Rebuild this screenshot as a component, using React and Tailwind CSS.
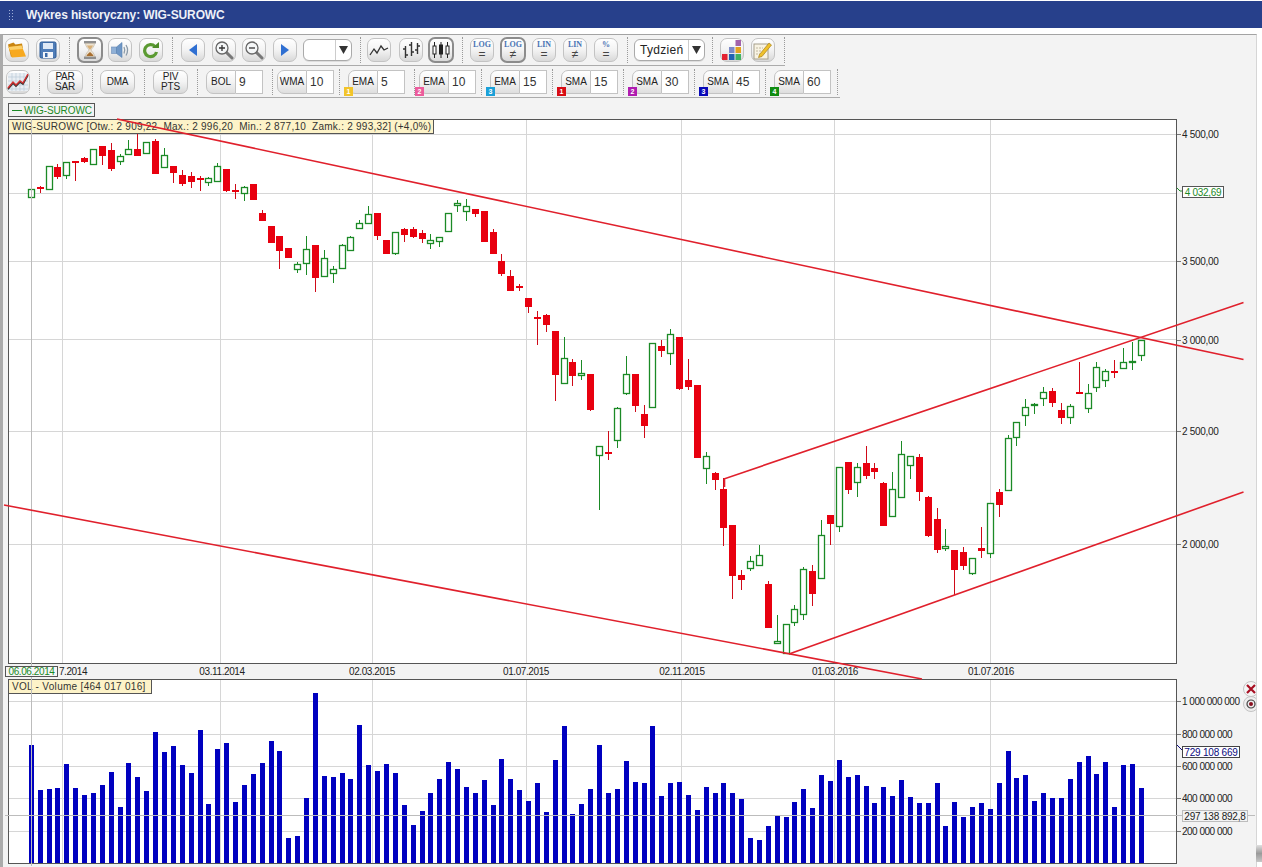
const candles = [
  [189,189,197,197,1],[186,187,189,193,0],[166,166,189,189,1],[164,167,177,179,0],[162,162,175,179,1],[161,161,163,181,0],
  [157,158,162,163,0],[149,149,164,164,1],[146,146,156,165,0],[143,150,169,171,0],[154,156,161,165,1],[140,149,154,154,1],
  [133,149,156,156,0],[142,142,153,153,1],[139,141,174,174,0],[148,155,167,167,1],[166,166,173,183,0],[170,175,184,186,0],
  [172,176,182,188,0],[176,178,180,191,0],[177,178,182,186,1],[163,166,181,181,1],[169,169,191,192,0],[184,190,192,199,0],
  [186,187,193,201,1],[184,184,200,200,0],[210,213,221,221,0],[226,226,243,243,0],[236,236,251,269,0],[248,248,258,258,0],
  [262,264,269,273,1],[236,249,263,275,1],[245,245,278,292,0],[250,258,276,276,1],[266,269,273,283,1],[244,245,268,268,1],
  [236,237,250,250,1],[220,223,228,228,1],[206,214,223,223,1],[213,213,236,240,0],[240,240,254,254,0],[232,232,253,255,1],
  [228,229,235,242,0],[227,229,237,238,0],[230,233,239,243,0],[234,240,243,249,1],[237,237,241,247,1],[213,213,231,231,1],
  [200,203,205,212,1],[199,206,211,221,1],[209,209,214,217,0],[211,211,242,242,0],[229,232,254,254,0],[254,261,274,276,0],
  [270,276,291,291,0],[284,286,287,291,0],[298,298,307,313,0],[311,317,319,345,0],[314,315,325,332,0],[331,331,375,401,0],
  [337,358,383,383,1],[359,362,376,386,0],[360,373,375,380,1],[374,374,410,411,0],[446,446,455,510,1],[431,452,454,460,0],
  [407,408,440,448,1],[356,374,393,395,1],[374,374,406,412,0],[405,414,426,438,0],[343,343,407,407,1],[340,346,351,357,0],
  [329,334,353,365,1],[337,337,389,390,0],[359,380,387,390,0],[385,385,458,458,0],[452,456,468,484,1],[472,473,480,490,0],
  [478,489,528,546,0],[525,525,576,599,0],[570,575,580,590,0],[556,561,568,571,1],[545,555,565,565,1],[581,584,628,628,0],
  [615,641,643,644,1],[624,624,653,653,1],[605,609,622,626,1],[567,569,614,620,1],[565,571,594,606,0],[520,535,578,578,1],
  [515,515,524,545,0],[467,467,526,532,1],[462,462,490,494,0],[463,467,482,497,1],[446,463,476,479,0],[463,468,472,479,0],
  [482,483,526,526,0],[472,489,516,516,1],[441,454,497,497,1],[456,456,465,479,1],[454,457,492,501,0],[496,497,536,537,0],
  [508,519,550,553,0],[529,546,548,551,1],[550,550,570,595,0],[547,552,566,570,0],[558,558,573,575,1],[527,548,551,558,0],
  [503,503,553,558,1],[489,492,505,517,0],[435,438,490,490,1],[422,422,437,446,1],[399,407,415,426,1],[403,404,405,414,1],
  [387,392,398,406,1],[388,391,403,407,0],[403,410,418,424,0],[404,406,417,424,1],[362,392,393,393,0],[384,393,408,413,1],
  [362,367,387,392,1],[369,371,380,387,1],[360,371,372,378,0],[348,362,368,369,1],[342,361,362,370,1],[340,340,355,361,1],
]

const volumeTops = [
  745,790,789,788,764,788,795,793,785,772,807,763,777,791,732,752,746,765,773,730,804,749,743,802,785,774,763,741,751,838,836,798,693,776,777,773,779,725,765,771,764,773,805,825,
  811,793,779,762,769,787,793,780,805,759,779,790,801,783,812,760,726,814,804,789,745,793,789,761,782,783,726,796,783,782,795,810,787,793,783,793,799,838,840,826,816,817,802,789,808,775,781,760,777,775,786,803,787,796,780,797,803,803,783,826,802,817,807,803,809,783,
  751,778,775,801,793,798,798,779,762,756,774,762,807,765,764,788,
]

const gridX = [62, 220, 372, 526, 681, 834, 990]
const priceGrid = [134, 193, 261, 339, 431, 544]
const volGrid = [701, 734, 766, 798, 831]
const priceLabels = [[134, '4 500,00'], [261, '3 500,00'], [340, '3 000,00'], [431, '2 500,00'], [544, '2 000,00']]
const volLabels = [[701, '1 000 000 000'], [734, '800 000 000'], [766, '600 000 000'], [798, '400 000 000'], [831, '200 000 000']]
const dates = [[73, '7.2014'], [222, '03.11.2014'], [372, '02.03.2015'], [526, '01.07.2015'], [682, '02.11.2015'], [835, '01.03.2016'], [991, '01.07.2016']]

const centerX = (i) => Math.floor(31.3 + 8.88 * i) + 0.5

function Candles() {
  return candles.map(([high, top, bottom, low, up], i) => {
    const x = centerX(i)
    const color = up ? '#1b8a26' : '#e8000f'
    return (
      <g key={i}>
        <line x1={x} x2={x} y1={high} y2={low} stroke={up ? '#1b8a26' : '#cf0a18'} />
        {up
          ? <rect x={x - 3} y={top + 0.5} width={6} height={bottom - top} fill="#fff" stroke={color} strokeWidth="1.3" shapeRendering="geometricPrecision" />
          : <rect x={x - 3.5} y={top} width={7} height={Math.max(bottom - top, 2)} fill={color} />}
      </g>
    )
  })
}

function Grid({ rows, top, bottom }) {
  return (
    <g stroke="#d6d6d6">
      {gridX.map((x) => <line key={x} x1={x + 0.5} x2={x + 0.5} y1={top} y2={bottom} />)}
      {rows.map((y) => <line key={y} x1={9} x2={1176} y1={y + 0.5} y2={y + 0.5} />)}
    </g>
  )
}

function AxisLabel({ y, children, base, className = '' }) {
  return (
    <div className={`absolute left-0 flex h-[12px] items-center whitespace-nowrap text-[10px] text-[#222] ${className}`} style={{ top: y - base - 6 }}>
      <span className="mr-px h-px w-[4px] bg-[#777]" />
      {children}
    </div>
  )
}

function Sep() {
  return <div className="h-[26px] w-px self-center border-l border-dotted border-[#9a9a9a]" />
}

function Btn({ className = '', active, children }) {
  return (
    <div className={`flex shrink-0 items-center justify-center rounded-[7px] bg-linear-to-b from-white via-[#f3f3f3] to-[#d9d9d9] ${active ? 'h-[26px] w-[26px] border-2 border-[#8c8c8c]' : 'h-[24px] w-[24px] border border-[#c3c3c3]'} ${className}`}>
      {children}
    </div>
  )
}

function TextBtn({ className = '', children }) {
  return (
    <div className={`flex h-[24px] shrink-0 flex-col items-center justify-center rounded-[7px] border border-[#c3c3c3] bg-linear-to-b from-white via-[#f3f3f3] to-[#d9d9d9] text-[10px] leading-[10px] tracking-[-0.2px] text-[#222] ${className}`}>
      {children}
    </div>
  )
}

function Scale({ active, top, bottom, className = '' }) {
  return (
    <Btn active={active} className={className}>
      <div className="flex flex-col items-center">
        <span className="font-['Liberation_Serif',serif] text-[8px] leading-[9px] font-bold text-[#4a74b4]">{top}</span>
        <span className="text-[12px] leading-[11px] text-[#444]">{bottom}</span>
      </div>
    </Btn>
  )
}

function Combo({ label, value, badge, badgeClass, className = '' }) {
  return (
    <div className={`relative flex h-[24px] w-[57px] shrink-0 ${className}`}>
      <div className="flex w-[30px] items-center justify-center rounded-l-[7px] border border-[#c3c3c3] bg-linear-to-b from-white via-[#f3f3f3] to-[#dedede] text-[10px] text-[#222]">{label}</div>
      <div className="flex flex-1 items-center border border-l-0 border-[#c3c3c3] bg-white pl-[3px] text-[12px] text-[#333]">{value}</div>
      {badge && <span className={`absolute top-[17px] -left-[4px] flex h-[9px] w-[9px] items-center justify-center text-[7px] leading-none font-bold text-white ${badgeClass}`}>{badge}</span>}
    </div>
  )
}

const Folder = () => (
  <svg width="20" height="18" viewBox="0 0 20 18">
    <path d="M1 3.500 6.500 1.500 8.500 3.500 15 2.500 16 8 4 16Z" fill="#c98512" />
    <path d="M1.500 6 14.500 4.500 19 15.500 5 16.500Z" fill="#f7a91f" />
    <path d="M1.500 6 14.500 4.500 16 8 3 9Z" fill="#fcd06a" />
  </svg>
)
const Floppy = () => (
  <svg width="18" height="18" viewBox="0 0 18 18">
    <rect x="1" y="1" width="16" height="16" rx="1.500" fill="#4f7db8" stroke="#2d5b96" />
    <rect x="4" y="2" width="10" height="6" fill="#dfe9f6" />
    <rect x="4" y="11" width="10" height="6" fill="#f2f5fa" />
    <rect x="6" y="12" width="2.500" height="4" fill="#3a6aa8" />
  </svg>
)
const Hourglass = () => (
  <svg width="16" height="20" viewBox="0 0 16 20">
    <rect x="2" y="1" width="12" height="2.500" fill="#8f8f8f" />
    <rect x="2" y="16.500" width="12" height="2.500" fill="#8f8f8f" />
    <path d="M3.500 3.500H12.500C12.500 7 9.500 8.500 9 10 9.500 11.500 12.500 13 12.500 16.500H3.500C3.500 13 6.500 11.500 7 10 6.500 8.500 3.500 7 3.500 3.500Z" fill="#ece3d3" stroke="#b3a58e" strokeWidth=".5" />
    <path d="M5 5.500H11C10.500 7.500 8.500 8.500 8 10 7.500 8.500 5.500 7.500 5 5.500Z" fill="#d8b078" />
    <path d="M4.500 16H11.500C11 14 9 13 8 12 7 13 5 14 4.500 16Z" fill="#a86f30" />
  </svg>
)
const Speaker = () => (
  <svg width="20" height="18" viewBox="0 0 20 18">
    <rect x="1.500" y="6" width="5" height="6.500" fill="#8fb0d6" stroke="#6c8db8" strokeWidth=".6" />
    <path d="M6.500 6 12 1.500V16.500L6.500 12.500Z" fill="#6f97c6" stroke="#557fb0" strokeWidth=".6" />
    <path d="M14 6C15 8 15 10.500 14 12.500M16 4C17.800 7 17.800 11.500 16 14.500" fill="none" stroke="#8a9aa8" strokeWidth="1.300" />
  </svg>
)
const Refresh = () => (
  <svg width="18" height="18" viewBox="0 0 18 18">
    <path d="M13 5.500A6 6 0 1 0 14.500 11" fill="none" stroke="#5b9a32" strokeWidth="3.200" />
    <path d="M10 7H17V1Z" fill="#4f8d2a" />
  </svg>
)
const Tri = ({ left }) => (
  <svg width="10" height="14" viewBox="0 0 10 14">
    <path d={left ? 'M9 1V13L1 7Z' : 'M1 1V13L9 7Z'} fill="#2f6fd2" />
  </svg>
)
const Magnifier = ({ plus }) => (
  <svg width="20" height="20" viewBox="0 0 20 20">
    <path d="M11.500 11.500 18 18" stroke="#777" strokeWidth="3" strokeLinecap="round" />
    <circle cx="8" cy="8" r="6" fill="#f5f7f8" stroke="#666" strokeWidth="1.300" />
    <path d={plus ? 'M5 8H11M8 5V11' : 'M5 8H11'} stroke="#333" strokeWidth="1.300" />
  </svg>
)
const LineIcon = () => (
  <svg width="20" height="14" viewBox="0 0 20 14">
    <path d="M1 12 5 6 8 10 12 3 15 7 19 5" fill="none" stroke="#333" strokeWidth="1.300" />
  </svg>
)
const BarsIcon = () => (
  <svg width="20" height="18" viewBox="0 0 20 18">
    <path d="M4.500 5V17M2 8H4.500M4.500 14H7M10.500 1V15M8 4H10.500M10.500 11H13M16.500 2V13M14 9H16.500M16.500 5H19" stroke="#333" strokeWidth="1.400" fill="none" />
  </svg>
)
const CandleIcon = () => (
  <svg width="20" height="18" viewBox="0 0 20 18" stroke="#222">
    <path d="M3.500 1V17M10 1V17M16.500 1V17" />
    <rect x="2" y="5" width="3" height="8" fill="#fff" />
    <rect x="8.500" y="4" width="3" height="9" fill="#222" />
    <rect x="15" y="5" width="3" height="8" fill="#fff" />
  </svg>
)
const Palette = () => (
  <svg width="20" height="20" viewBox="0 0 20 20">
    <rect x="13.500" y="0" width="5.500" height="6" fill="#a263ab" />
    <rect x="7" y="7" width="5.500" height="6" fill="#7c8ac8" />
    <rect x="13.500" y="7" width="5.500" height="6" fill="#e3a21f" />
    <rect x="0" y="14" width="5.500" height="6" fill="#e32130" />
    <rect x="7" y="14" width="5.500" height="6" fill="#1f63b3" />
    <rect x="13.500" y="14" width="5.500" height="6" fill="#3fb264" />
  </svg>
)
const Note = () => (
  <svg width="20" height="20" viewBox="0 0 20 20">
    <rect x="1" y="4" width="14" height="15" fill="#f8f3e3" stroke="#a6a08c" />
    <path d="M3 8H10M3 11H8M3 14H7" stroke="#c0b8a0" strokeDasharray="2 1" />
    <path d="M6.500 14.500 16 3 18.500 5 9 16.500 5.500 17.500Z" fill="#efc12a" stroke="#a6801c" strokeWidth=".7" />
  </svg>
)
const ChartIcon = () => (
  <svg width="22" height="20" viewBox="0 0 22 20">
    <rect x="1" y="1" width="20" height="18" fill="#e9eef3" />
    <path d="M1 5H21M1 9H21M1 13H21M1 17H21M5 1V19M9 1V19M13 1V19M17 1V19" stroke="#bccad8" strokeWidth=".7" />
    <path d="M1 16 6 10 9 13 13 9 16 11 21 2" fill="none" stroke="#333" strokeWidth="1.500" transform="translate(0 1.200)" />
    <path d="M1 16 6 10 9 13 13 9 16 11 21 2" fill="none" stroke="#d23030" strokeWidth="1.500" />
  </svg>
)

function Select({ className, text }) {
  return (
    <div className={`flex h-[22px] shrink-0 items-center rounded-[6px] border border-[#aaa] bg-white shadow-[0_1px_0_#ddd] ${className}`}>
      <span className="flex-1 pl-[5px] text-[12px] tracking-[0.3px] text-[#222]">{text}</span>
      <span className="flex h-full w-[16px] items-center justify-center border-l border-[#ccc]">
        <svg width="9" height="8" viewBox="0 0 9 8"><path d="M0 0H9L4.500 8Z" fill="#333" /></svg>
      </span>
    </div>
  )
}

export default function App() {
  return (
    <div className="relative h-[867px] w-[1262px] overflow-hidden bg-white font-['Liberation_Sans',Arial,sans-serif]">
      <div className="mt-px flex h-[27px] items-center bg-[#27408b] pl-[9px]">
        <svg width="4" height="10" viewBox="0 0 4 10" fill="#9fb0d8">
          <path d="M0 0h1v1H0zM3 0h1v1H3zM0 3h1v1H0zM3 3h1v1H3zM0 6h1v1H0zM3 6h1v1H3zM0 9h1v1H0zM3 9h1v1H3z" />
        </svg>
        <span className="ml-[13px] text-[12px] font-bold tracking-[-0.13px] text-[#eef1f8]">Wykres historyczny: WIG-SUROWC</span>
      </div>

      <div className="mt-[6px] h-[833px] w-[1257px] border-t border-r border-l-[3px] border-t-[#a3a3a3] border-r-[#d6d6d6] border-l-[#ababab] bg-[#f3f3f3]">
        <div className="flex h-[31px] w-[782px] items-center border-b border-[#ababab] pl-[2px]">
          <Btn><Folder /></Btn>
          <Btn className="ml-[7px]"><Floppy /></Btn>
          <div className="ml-[9px] flex"><Sep /></div>
          <Btn active className="ml-[7px]"><Hourglass /></Btn>
          <Btn className="ml-[5px]"><Speaker /></Btn>
          <Btn className="ml-[7px]"><Refresh /></Btn>
          <div className="ml-[9px] flex"><Sep /></div>
          <Btn className="ml-[8px]"><Tri left /></Btn>
          <Btn className="ml-[7px]"><Magnifier plus /></Btn>
          <Btn className="ml-[6px]"><Magnifier /></Btn>
          <Btn className="ml-[7px]"><Tri /></Btn>
          <Select className="ml-[6px] w-[49px]" text="" />
          <div className="ml-[8px] flex"><Sep /></div>
          <Btn className="ml-[6px]"><LineIcon /></Btn>
          <Btn className="ml-[8px]"><BarsIcon /></Btn>
          <Btn active className="ml-[5px]"><CandleIcon /></Btn>
          <div className="ml-[8px] flex"><Sep /></div>
          <Scale className="ml-[7px]" top="LOG" bottom="=" />
          <Scale active className="ml-[6px]" top="LOG" bottom="≠" />
          <Scale className="ml-[6px]" top="LIN" bottom="=" />
          <Scale className="ml-[7px]" top="LIN" bottom="≠" />
          <Scale className="ml-[7px]" top="%" bottom="=" />
          <div className="ml-[9px] flex"><Sep /></div>
          <Select className="ml-[6px] w-[71px]" text="Tydzień" />
          <div className="ml-[7px] flex"><Sep /></div>
          <Btn className="ml-[7px]"><Palette /></Btn>
          <Btn className="ml-[7px]"><Note /></Btn>
          <div className="ml-[9px] flex"><Sep /></div>
        </div>

        <div className="flex h-[32px] w-[837px] items-center border-b border-[#ababab] pl-[3px]">
          <Btn><ChartIcon /></Btn>
          <div className="ml-[9px] flex"><Sep /></div>
          <TextBtn className="ml-[7px] w-[36px]"><span>PAR</span><span>SAR</span></TextBtn>
          <div className="ml-[9px] flex"><Sep /></div>
          <TextBtn className="ml-[7px] w-[35px]">DMA</TextBtn>
          <div className="ml-[9px] flex"><Sep /></div>
          <TextBtn className="ml-[8px] w-[35px]"><span>PIV</span><span>PTS</span></TextBtn>
          <div className="ml-[9px] flex"><Sep /></div>
          <Combo className="ml-[8px]" label="BOL" value="9" />
          <div className="ml-[9px] flex"><Sep /></div>
          <Combo className="ml-[4px]" label="WMA" value="10" />
          <div className="ml-[5px] flex"><Sep /></div>
          <Combo className="ml-[8px]" label="EMA" value="5" badge="1" badgeClass="bg-[#f2c429]" />
          <div className="ml-[9px] flex"><Sep /></div>
          <Combo className="ml-[4px]" label="EMA" value="10" badge="2" badgeClass="bg-[#ec5c9c]" />
          <div className="ml-[5px] flex"><Sep /></div>
          <Combo className="ml-[8px]" label="EMA" value="15" badge="3" badgeClass="bg-[#1aa0d8]" />
          <div className="ml-[5px] flex"><Sep /></div>
          <Combo className="ml-[8px]" label="SMA" value="15" badge="1" badgeClass="bg-[#d80c14]" />
          <div className="ml-[5px] flex"><Sep /></div>
          <Combo className="ml-[8px]" label="SMA" value="30" badge="2" badgeClass="bg-[#b01cb0]" />
          <div className="ml-[5px] flex"><Sep /></div>
          <Combo className="ml-[8px]" label="SMA" value="45" badge="3" badgeClass="bg-[#0808b8]" />
          <div className="ml-[5px] flex"><Sep /></div>
          <Combo className="ml-[8px]" label="SMA" value="60" badge="4" badgeClass="bg-[#108c10]" />
          <div className="ml-[6px] flex"><Sep /></div>
        </div>

        <div className="h-[21px] pt-[5px] pl-[5px]">
          <div className="flex h-[14px] w-[87px] items-center whitespace-nowrap border border-[#555] pl-[3px] text-[10px] tracking-[-0.1px] text-[#1b8a26]">
            <span className="mr-[2px] h-px w-[10px] bg-[#1b8a26]" />WIG-SUROWC
          </div>
        </div>

        <div className="flex h-[545px] pl-[5px]">
          <div className="relative h-full w-[1169px] border border-[#555] bg-white">
            <svg className="block h-full w-full" viewBox="9 120 1167 543" shapeRendering="crispEdges">
              <Grid rows={priceGrid} top={120} bottom={663} />
              <Candles />
            </svg>
            <div className="absolute -top-px -left-px flex h-[15px] w-[426px] items-center whitespace-pre border border-[#555] bg-[#fdf3c8] pl-[3px] text-[10px] tracking-[0.25px] text-[#333]">
              {'WIG-SUROWC [Otw.: 2 909,22  Max.: 2 996,20  Min.: 2 877,10  Zamk.: 2 993,32] (+4,0%)'}
            </div>
          </div>
          <div className="relative flex-1">
            {priceLabels.map(([y, text]) => <AxisLabel key={y} y={y} base={119} className="tracking-[-0.3px]">{text}</AxisLabel>)}
            <div className="absolute top-[67px] left-[5px] z-10 flex h-[12px] w-[42px] items-center justify-center whitespace-nowrap border border-[#555] bg-white text-[10px] tracking-[-0.3px] text-[#1b8a26]">4 032,69</div>
          </div>
        </div>

        <div className="relative h-[15px] pl-[5px] text-[10px] tracking-[-0.4px] text-[#222]">
          {dates.map(([x, text]) => (
            <span key={text} className="absolute top-[2px] -translate-x-1/2 leading-[12px]" style={{ left: x - 3 }}>{text}</span>
          ))}
          <div className="absolute top-[2px] left-[2px] z-10 flex h-[11px] w-[53px] items-center justify-center whitespace-nowrap border border-[#555] bg-[#f6f6f6] text-[10px] tracking-[-0.4px] text-[#1b8a26]">06.06.2014</div>
        </div>

        <div className="flex h-[185px] pl-[5px]">
          <div className="relative h-full w-[1169px] border border-[#555] bg-white">
            <svg className="block h-full w-full" viewBox="9 680 1167 183" shapeRendering="crispEdges">
              <Grid rows={volGrid} top={680} bottom={863} />
              {volumeTops.map((top, i) => (
                <rect key={i} x={centerX(i) - 2.5} y={top} width={5} height={863 - top} fill="#0000bf" />
              ))}
            </svg>
            <div className="absolute -top-px -left-px flex h-[15px] w-[144px] items-center whitespace-nowrap border border-[#555] bg-[#fdf3c8] pl-[3px] text-[10px] tracking-[0.3px] text-[#333]">
              VOL - Volume [464 017 016]
            </div>
          </div>
          <div className="relative flex-1 overflow-hidden">
            {volLabels.map(([y, text]) => <AxisLabel key={y} y={y} base={679} className="tracking-[-0.5px]">{text}</AxisLabel>)}
            <div className="absolute top-[67px] left-[5px] flex h-[12px] w-[58px] items-center justify-center whitespace-nowrap border border-[#444] bg-white text-[10px] tracking-[-0.2px] text-[#0a0a80]">729 108 669</div>
            <div className="absolute top-[131px] left-[5px] z-10 flex h-[12px] w-[66px] items-center justify-center whitespace-nowrap border border-[#bdbdbd] bg-[#f3f3f3] text-[10px] tracking-[-0.2px] text-[#222]">297 138 892,8</div>
            <div className="absolute top-[2px] left-[66px] flex h-[16px] w-[16px] items-center justify-center rounded-full border border-[#c3c3c3] bg-[#f5f5f5]">
              <svg width="10" height="10" viewBox="0 0 10 10"><path d="M1 1 9 9M9 1 1 9" stroke="#a80f22" strokeWidth="2.200" /></svg>
            </div>
            <div className="absolute top-[17px] left-[66px] flex h-[16px] w-[16px] items-center justify-center rounded-full border border-[#c3c3c3] bg-[#eee]">
              <svg width="10" height="10" viewBox="0 0 10 10"><circle cx="5" cy="5" r="4" fill="none" stroke="#444" strokeWidth="1.200" /><circle cx="5" cy="5" r="2" fill="#8a1020" /></svg>
            </div>
          </div>
        </div>
      </div>

      <div className="absolute top-[845px] right-0 h-[17px] w-[6px] bg-linear-to-b from-[#e0e0e0] via-[#9a9a9a] to-[#c8c8c8]" />

      <svg className="pointer-events-none absolute inset-0 z-[5]" width="1262" height="867" viewBox="0 0 1262 867">
        <g stroke="#bcbcbc" fill="none" shapeRendering="crispEdges">
          <path d="M31.500 119V866" />
          <path d="M5 815.500H1255" />
        </g>
        <g stroke="#e0202c" strokeWidth="1.600" fill="none">
          <path d="M117 119 1243.500 359.500" />
          <path d="M724.500 487V478.700L1243.500 302.500" />
          <path d="M789 654 1243.500 492" />
          <path d="M4 505 922 679" />
        </g>
        <path d="M1177 188 1180 191H1182" stroke="#1b8a26" fill="none" />
        <path d="M1177 745 1182 750" stroke="#0a0a80" fill="none" />
      </svg>
    </div>
  )
}
